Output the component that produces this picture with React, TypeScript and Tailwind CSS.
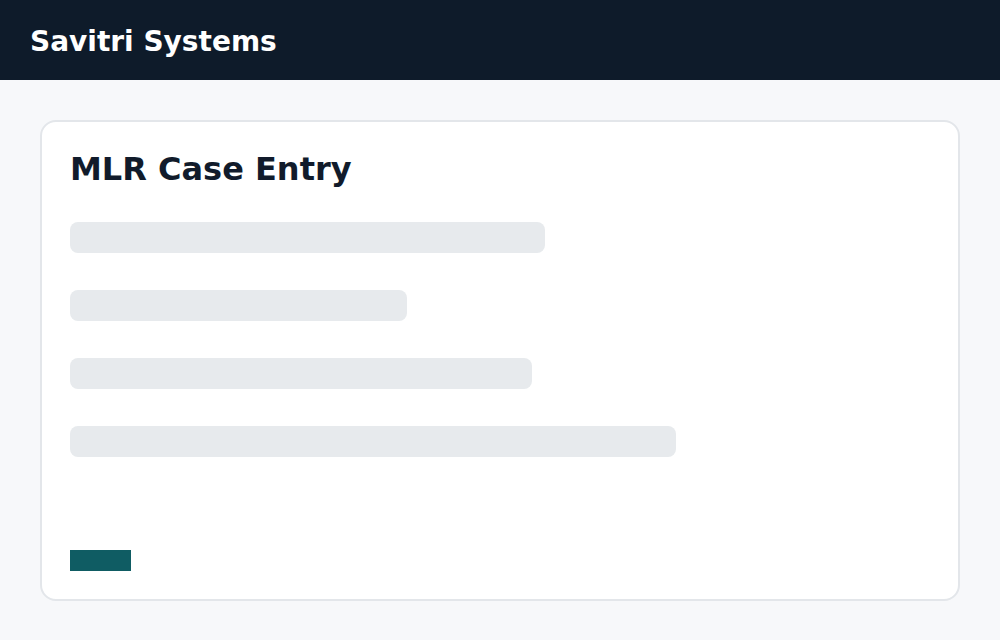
export default function App() {
  const bars = [475, 337, 462, 606];
  return (
    <div className="min-h-[640px] bg-[#f7f8fa] flex flex-col" style={{ fontFamily: '"DejaVu Sans", sans-serif' }}>
      <header className="h-[80px] bg-[#0e1b2a] flex items-center px-[30px] pt-[3px]">
        <h1 className="text-[28px] font-bold text-white leading-none">Savitri Systems</h1>
      </header>
      <main className="px-[40px] pt-[40px] pb-[40px]">
        <div className="h-[481px] bg-white border-2 border-[#e3e6ea] rounded-[16px] px-[28px] pt-[29px] pb-[28px] flex flex-col">
          <h2 className="text-[32px] font-bold text-[#111b2b] leading-[37px]">MLR Case Entry</h2>
          <div className="mt-[34px] flex flex-col gap-[37px]">
            {bars.map((w, i) => (
              <div key={i} className="h-[31px] rounded-[8px] bg-[#e7eaed]" style={{ width: w }} />
            ))}
          </div>
          <div className="mt-auto w-[61px] h-[21px] bg-[#0f5c63]" />
        </div>
      </main>
    </div>
  );
}
